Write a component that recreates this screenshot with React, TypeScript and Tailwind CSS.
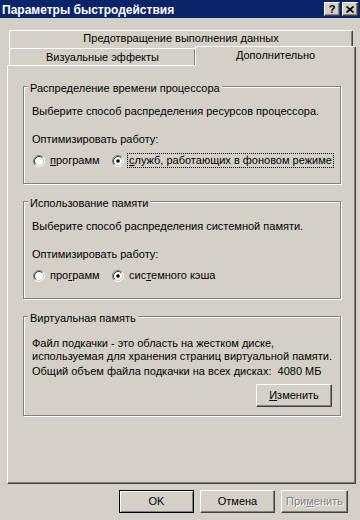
import React from "react";

const raised =
  "border border-t-white border-l-white border-r-[#404040] border-b-[#404040] shadow-[inset_-1px_-1px_0_#808080]";
const tab =
  "border-t border-l border-r border-t-white border-l-white border-r-[#404040] shadow-[inset_-1px_0_0_#808080] rounded-t-[2px] text-center leading-[13px] bg-[#d4d0c8]";

function Radio({ checked }: { checked?: boolean }) {
  return (
    <svg width="12" height="12" viewBox="0 0 12 12" className="shrink-0">
      <circle cx="6" cy="6" r="4" fill="#fff" />
      <path d="M2.11 9.89A5.5 5.5 0 0 1 9.89 2.11" fill="none" stroke="#808080" />
      <path d="M9.89 2.11A5.5 5.5 0 0 1 2.11 9.89" fill="none" stroke="#fff" />
      <path d="M2.82 9.18A4.5 4.5 0 0 1 9.18 2.82" fill="none" stroke="#404040" />
      <path d="M9.18 2.82A4.5 4.5 0 0 1 2.82 9.18" fill="none" stroke="#d4d0c8" />
      {checked && <circle cx="6" cy="6" r="1.8" fill="#000" />}
    </svg>
  );
}

function Group({
  title,
  className,
  children,
}: {
  title: string;
  className: string;
  children: React.ReactNode;
}) {
  return (
    <div
      className={`relative ml-[15px] w-[318px] border border-[#808080] shadow-[1px_1px_0_#fff,inset_1px_1px_0_#fff] pl-[8px] flex flex-col ${className}`}
    >
      <span className="absolute -top-[5px] left-[4px] bg-[#d4d0c8] px-[2px] leading-[13px]">
        {title}
      </span>
      {children}
    </div>
  );
}

function OptimizeBlock({
  text,
  first,
  second,
}: {
  text: string;
  first: React.ReactNode;
  second: React.ReactNode;
}) {
  return (
    <>
      <p className="leading-[13px]">{text}</p>
      <p className="mt-[15px] leading-[13px]">Оптимизировать работу:</p>
      <div className="mt-[8px] h-[13px] flex items-center">
        <div className="w-[80px] flex items-center pl-[1px]">
          <Radio />
          <span className="ml-[5px] leading-[13px]">{first}</span>
        </div>
        <div className="flex items-center">
          <Radio checked />
          {second}
        </div>
      </div>
    </>
  );
}

export default function App() {
  return (
    <div className="w-[360px] h-[520px] bg-[#d4d0c8] overflow-hidden text-[11px] text-black font-['Liberation_Sans','DejaVu_Sans',sans-serif]">
      {/* title bar */}
      <div className="h-[18px] bg-[#0a246a] flex items-center justify-between pl-[2px] pr-[2px]">
        <span className="text-white font-bold text-[12px] leading-[14px] pt-[1px]">
          Параметры быстродействия
        </span>
        <div className="flex gap-[2px]">
          <div className={`w-[16px] h-[14px] bg-[#d4d0c8] flex items-center justify-center font-bold text-[11px] leading-[11px] ${raised}`}>
            ?
          </div>
          <div className={`w-[16px] h-[14px] bg-[#d4d0c8] flex items-center justify-center ${raised}`}>
            <svg width="8" height="7" viewBox="0 0 8 7">
              <path d="M0.5 0.5L7.5 6.5M7.5 0.5L0.5 6.5" stroke="#000" strokeWidth="1.7" />
            </svg>
          </div>
        </div>
      </div>

      {/* tabs */}
      <div className="mt-[12px]">
        <div className={`ml-[9px] w-[344px] h-[18px] pt-[1px] ${tab}`}>
          Предотвращение выполнения данных
        </div>
        <div className="ml-[9px] h-[17px] flex items-end">
          <div className={`w-[187px] h-[17px] pt-[2px] ${tab}`}>Визуальные эффекты</div>
          <div className={`relative z-10 -ml-[1px] -mb-[1px] w-[161px] h-[20px] pt-[2px] ${tab}`}>
            Дополнительно
          </div>
        </div>
      </div>

      {/* panel */}
      <div className={`ml-[7px] w-[349px] h-[419px] flex flex-col ${raised}`}>
        <Group title="Распределение времени процессора" className="mt-[20px] h-[98px] pt-[18px]">
          <OptimizeBlock
            text="Выберите способ распределения ресурсов процессора."
            first={
              <>
                <u>п</u>рограмм
              </>
            }
            second={
              <span className="ml-[3px] border border-dotted border-black pl-[1px] pr-[1px] leading-[13px]">
                <u>с</u>лужб, работающих в фоновом режиме
              </span>
            }
          />
        </Group>

        <Group title="Использование памяти" className="mt-[17px] h-[98px] pt-[18px]">
          <OptimizeBlock
            text="Выберите способ распределения системной памяти."
            first={
              <>
                про<u>г</u>рамм
              </>
            }
            second={
              <span className="ml-[5px] leading-[13px]">
                сис<u>т</u>емного кэша
              </span>
            }
          />
        </Group>

        <Group title="Виртуальная память" className="mt-[17px] h-[100px] pt-[20px]">
          <p className="leading-[13px]">Файл подкачки - это область на жестком диске,</p>
          <p className="leading-[13px]">используемая для хранения страниц виртуальной памяти.</p>
          <p className="mt-[2px] leading-[13px] whitespace-pre">
            Общий объем файла подкачки на всех дисках:  4080 МБ
          </p>
          <button
            className={`mt-[6px] self-end mr-[8px] w-[76px] h-[23px] bg-[#d4d0c8] leading-[13px] ${raised}`}
          >
            <u>И</u>зменить
          </button>
        </Group>
      </div>

      {/* dialog buttons */}
      <div className="mt-[6px] ml-[119px] flex gap-[6px]">
        <button className="w-[75px] h-[23px] bg-[#d4d0c8] border border-black shadow-[inset_1px_1px_0_#fff,inset_-1px_-1px_0_#808080] leading-[13px]">
          OK
        </button>
        <button className={`w-[75px] h-[23px] bg-[#d4d0c8] leading-[13px] ${raised}`}>Отмена</button>
        <button
          className={`w-[67px] h-[23px] bg-[#d4d0c8] leading-[13px] text-[#808080] [text-shadow:1px_1px_0_#fff] ${raised}`}
        >
          При<u>м</u>енить
        </button>
      </div>
    </div>
  );
}
